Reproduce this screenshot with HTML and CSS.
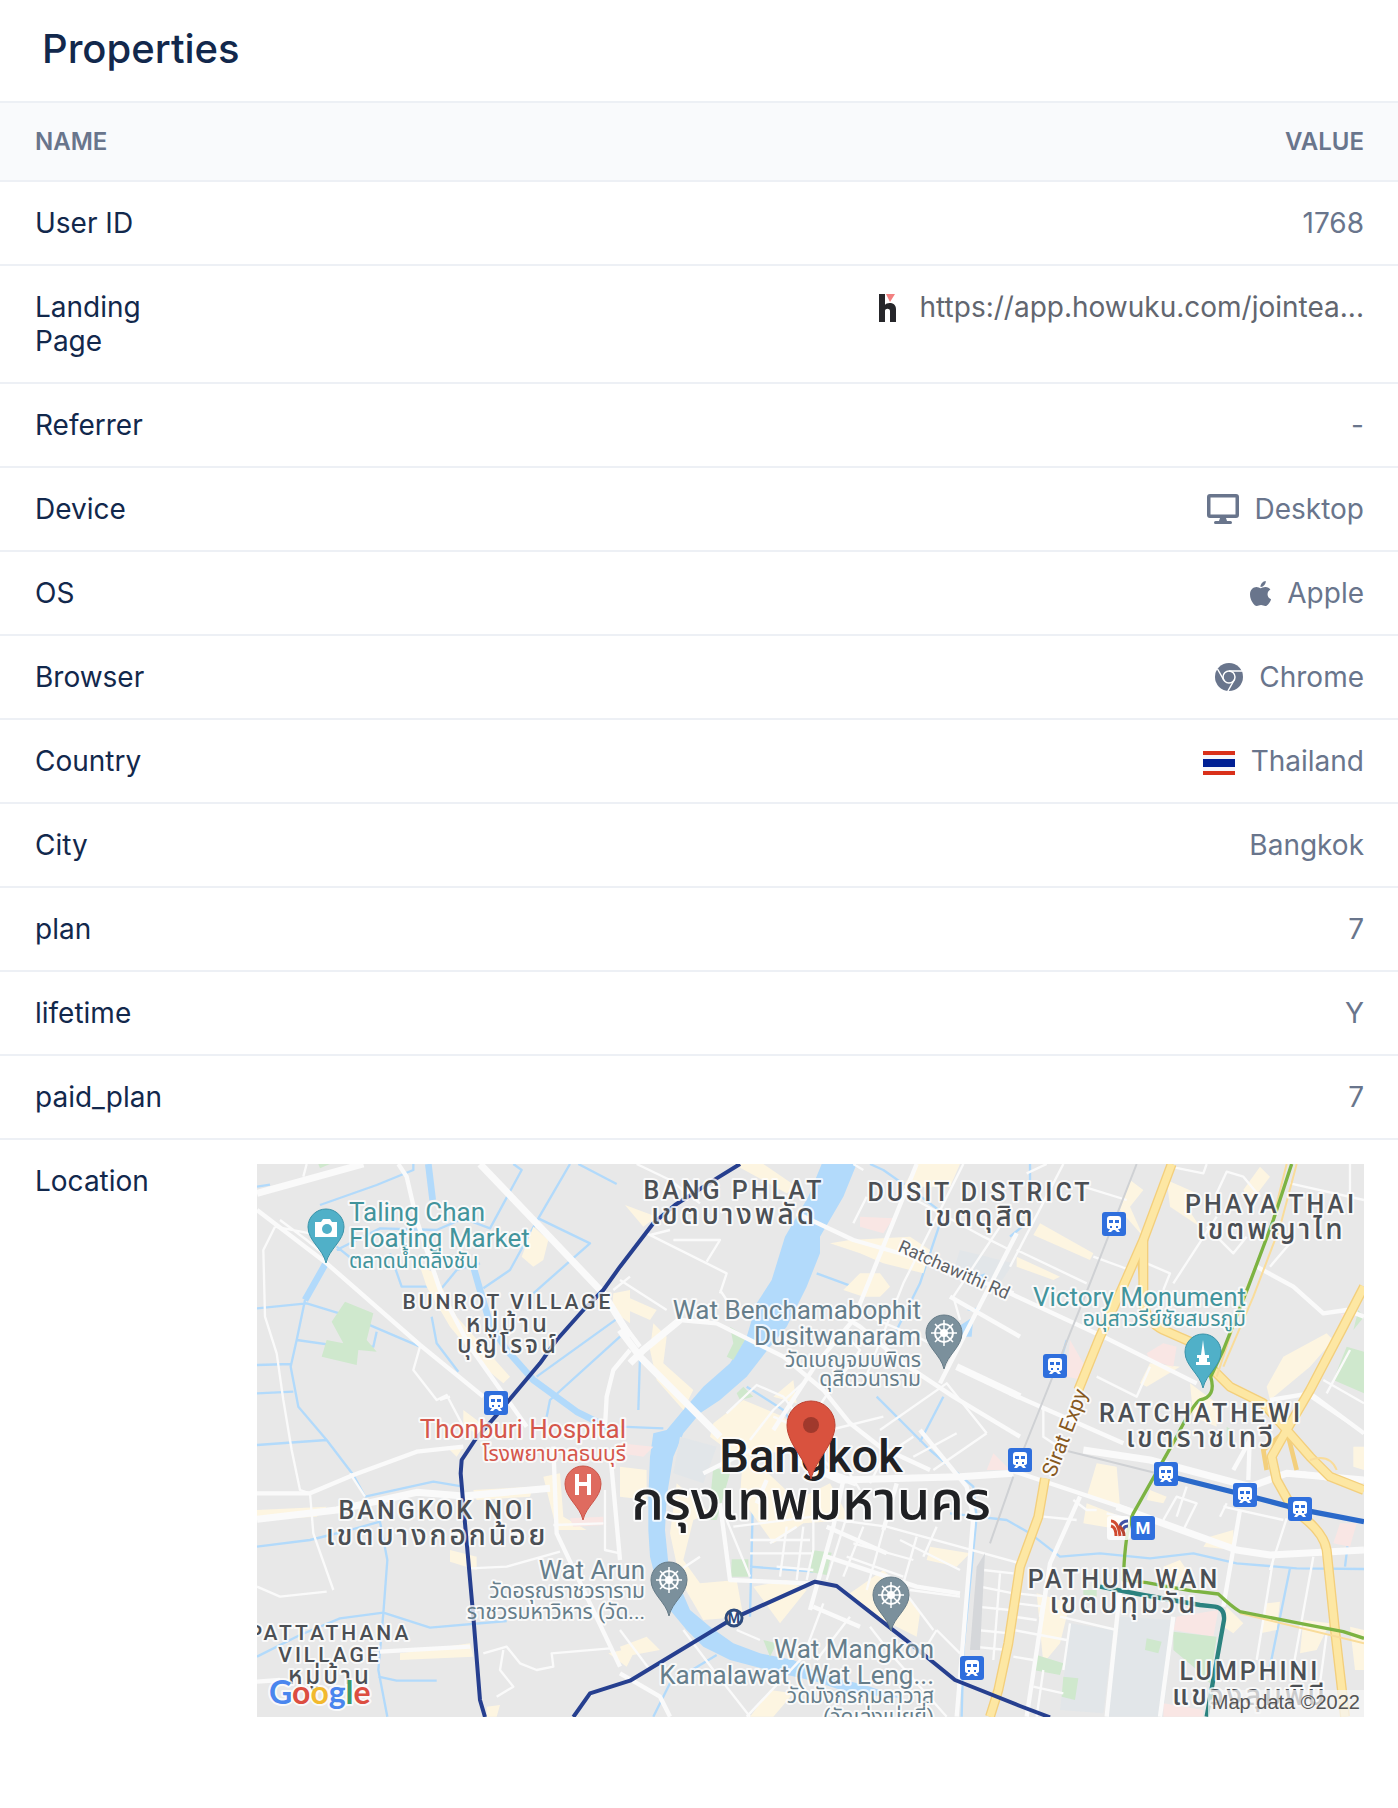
FILE: index.html
```html
<!DOCTYPE html>
<html lang="en">
<head>
    <meta charset="UTF-8">
    <meta name="viewport" content="width=device-width, initial-scale=1.0">
    <title>Properties</title>
    <link rel="stylesheet" href="styles.css">
</head>
<body>
    <section class="properties">
        <h2 class="title">Properties</h2>

        <table class="props-table">
            <thead>
                <tr>
                    <th class="name" scope="col">NAME</th>
                    <th class="value" scope="col">VALUE</th>
                </tr>
            </thead>
            <tbody>
                <tr>
                    <td class="name">User ID</td>
                    <td class="value">1768</td>
                </tr>
                <tr>
                    <td class="name">Landing Page</td>
                    <td class="value">
                        <a class="item link" href="#">
                            <svg class="icon" width="32" height="32" viewBox="0 0 32 32" aria-hidden="true">
                                <path d="M7 3h6v11c2-3 11-3 11 4v13h-6V20c0-3-5-3-5 0v11H7z" fill="#26262a"/>
                                <path d="M14 3h9l-5 8z" fill="#f28080"/>
                            </svg>
                            <span>https://app.howuku.com/jointea...</span>
                        </a>
                    </td>
                </tr>
                <tr>
                    <td class="name">Referrer</td>
                    <td class="value">-</td>
                </tr>
                <tr>
                    <td class="name">Device</td>
                    <td class="value">
                        <span class="item">
                            <svg class="icon" width="32" height="30" viewBox="0 0 32 30" aria-hidden="true">
                                <path fill-rule="evenodd" d="M3 0h26a3 3 0 0 1 3 3v18a3 3 0 0 1-3 3H19l1 3h3.500a1.500 1.500 0 0 1 0 3h-15a1.500 1.500 0 0 1 0-3H12l1-3H3a3 3 0 0 1-3-3V3a3 3 0 0 1 3-3zM3.500 3.500v17h25v-17z"/>
                            </svg>
                            <span>Desktop</span>
                        </span>
                    </td>
                </tr>
                <tr>
                    <td class="name">OS</td>
                    <td class="value">
                        <span class="item">
                            <svg class="icon" width="21" height="25" viewBox="4 32 376 448" aria-hidden="true">
                                <path d="M318.700 268.700c-.2-36.700 16.400-64.400 50-84.800-18.800-26.900-47.200-41.700-84.700-44.600-35.500-2.800-74.300 20.700-88.500 20.700-15 0-49.400-19.700-76.400-19.700C63.300 141.200 4 184.800 4 273.500q0 39.300 14.400 81.200c12.800 36.700 59 126.700 107.200 125.200 25.200-.6 43-17.900 75.800-17.900 31.800 0 48.300 17.900 76.400 17.900 48.600-.7 90.400-82.500 102.600-119.300-65.200-30.700-61.700-90-61.700-91.900zm-56.600-164.200c27.300-32.400 24.800-61.900 24-72.500-24.100 1.400-52 16.400-67.900 34.900-17.500 19.800-27.800 44.300-25.600 71.900 26.100 2 49.900-11.400 69.500-34.300z"/>
                            </svg>
                            <span>Apple</span>
                        </span>
                    </td>
                </tr>
                <tr>
                    <td class="name">Browser</td>
                    <td class="value">
                        <span class="item">
                            <svg class="icon" width="28" height="28" viewBox="0 0 28 28" aria-hidden="true">
                                <circle cx="14" cy="14" r="14"/>
                                <g fill="none" stroke="#fff" stroke-width="1.500">
                                    <circle cx="14" cy="14" r="6"/>
                                    <path d="M14 8h13M8.800 17L2.500 6M19.200 17l-6.300 11"/>
                                </g>
                            </svg>
                            <span>Chrome</span>
                        </span>
                    </td>
                </tr>
                <tr>
                    <td class="name">Country</td>
                    <td class="value">
                        <span class="item">
                            <svg class="icon" width="32" height="28" viewBox="0 0 32 28" aria-hidden="true">
                                <path d="M0 4h32v24H0z" fill="#d9301a"/>
                                <path d="M0 8h32v16H0z" fill="#f6f6fb"/>
                                <path d="M0 12h32v8H0z" fill="#001f94"/>
                            </svg>
                            <span>Thailand</span>
                        </span>
                    </td>
                </tr>
                <tr>
                    <td class="name">City</td>
                    <td class="value">Bangkok</td>
                </tr>
                <tr>
                    <td class="name">plan</td>
                    <td class="value">7</td>
                </tr>
                <tr>
                    <td class="name">lifetime</td>
                    <td class="value">Y</td>
                </tr>
                <tr>
                    <td class="name">paid_plan</td>
                    <td class="value">7</td>
                </tr>
                <tr>
                    <td class="name">Location</td>
                    <td class="value">
                        <svg class="map" viewBox="0 0 1107 553" role="img" aria-label="Map of Bangkok">
                            <defs>
                                <path id="pin" d="M0 36C-3 22-18 14-18 0A18 18 0 1 1 18 0C18 14 3 22 0 36z"/>
                                <g id="wheel" fill="none" stroke="#fff" stroke-width="2">
                                    <circle r="9"/>
                                    <circle r="3"/>
                                    <path d="M0-13V13M-13 0H13M-9-9L9 9M9-9L-9 9" stroke-width="1.500"/>
                                </g>
                                <g id="train">
                                    <rect x="-12" y="-12" width="24" height="24" rx="3" fill="#2f6fdd"/>
                                    <path fill="#fff" fill-rule="evenodd" d="M-4-8h8q3 0 3 3v8q0 2-3 2l2 3H3L1 6h-2l-2 2h-3l2-3q-3 0-3-2v-8q0-3 3-3zM-5-4v3h4v-3zM1-4v3h4v-3zM-4 2v2h2V2zM2 2v2h2V2z"/>
                                </g>
                            </defs>

                            <svg viewBox="21 42 3321 1659">
                                <rect class="land" x="21" y="42" width="3321" height="1659"/>

                                <!-- river and canals -->
                                <path class="water" d="M1715 42L1675 140 1605 260 1565 390 1520 460 1490 560 1440 640 1360 710 1300 780 1250 840 1210 850 1200 920 1195 1040 1195 1140 1200 1220 1220 1300 1260 1380 1310 1440 1360 1490 1440 1530 1590 1570 1700 1595 1800 1630 1960 1645 1860 1610 1710 1570 1630 1530 1530 1510 1450 1480 1380 1430 1320 1380 1290 1310 1255 1240 1245 1140 1250 1040 1270 920 1300 850 1350 790 1410 750 1490 680 1560 590 1610 530 1670 410 1710 310 1710 260 1780 140 1820 42z"/>
                                <g class="canal wide">
                                    <path d="M535 42L548 150M670 350L690 420 720 520 770 600 850 690 980 785 1110 850M230 335L165 450"/>
                                </g>
                                <g class="canal">
                                    <path d="M165 450L140 570 122 650 145 770 230 870 310 975 345 1040M21 475L170 460 300 500 510 590M140 570L280 590 370 590 380 545M345 1040L550 995 640 1010M21 1190L180 1170 300 1140 390 1115 412 1230 400 1390 385 1560 412 1700M21 1520L150 1455 270 1405 400 1388 540 1433 770 1413M385 1580L440 1592 560 1592M21 730L130 725M21 645L122 642M21 885L230 870M21 110L60 104M210 165L380 105 490 60 490 42M260 300L390 235 560 240 640 205 720 235 815 60 790 42M700 415L780 360 865 205 960 42M865 205L1020 280 850 430M545 500L560 580 625 665M420 310L455 410 540 410M575 415L620 360 690 340M890 800L900 750 1110 560M860 680L1110 500M985 42L1100 102M260 290L310 330"/>
                                    <path d="M1860 42L1900 60 2000 130 2080 190 2010 400 1940 540M1700 370L1800 407M1490 710L1600 780 1640 840M1110 830L1240 835M1170 620L1165 780M1880 740L2040 900 2170 1010 2180 1100 2140 1500 2135 1700M1510 1000L1500 1400M1500 1250L1690 1265M2100 1090L2270 1110 2340 1150 2430 1220 2550 1210 2700 1225 2830 1210 2960 1240 3140 1255 3342 1257M3120 1255L3060 1550M2450 570L2430 640M1210 1700L1260 1600 1400 1515M2010 875L2080 740M2340 210L2280 260M2340 42V130M3300 1130L3285 1250"/>
                                </g>

                                <!-- commercial areas -->
                                <path class="shop" d="M850 230L895 270 880 330 850 350 815 320zM510 350L560 370 570 400 620 500 780 680 760 700 700 650 600 530 530 410zM640 780L720 840 700 860 640 830zM1090 430L1140 420V520L1085 480zM1125 165L1220 200 1180 230zM590 890H640L620 920zM600 1200L680 1220 680 1260 600 1235zM21 1080L230 1070 200 1100 21 1110zM450 1510L660 1480 670 1520 450 1530zM710 1670L750 1665 740 1700H710zM1075 1510L1160 1490 1130 1550zM880 980L930 970 940 1100 1010 1140H920zM670 1020L850 1010 840 1040 680 1050z"/>
                                <path class="shop" d="M1450 42H1540L1640 110 1610 130zM1740 280L1800 270 1980 260 2040 300 2020 370 1900 340 1830 310zM1780 420L1830 370 1890 370 1920 410 1890 440 1840 440zM1960 110L2000 42 2130 42 2100 110zM1130 440L1220 480 1200 510 1110 470zM1210 520L1250 560 1240 640 1330 720 1300 780 1220 690 1200 600zM1390 820L1480 750 1600 800 1660 860 1640 900 1460 920 1380 860zM1280 1000L1380 1090 1330 1110 1300 1230 1350 1300 1460 1290 1480 1400 1360 1410 1290 1290 1260 1150zM1480 900L1640 1050 1740 1000 1800 1110 1660 1120 1570 1180 1470 1040zM1510 1310L1610 1290 1670 1320 1590 1420zM1800 1330L1900 1260 1960 1320 2010 1390 2000 1460 1880 1400zM2040 1190L2160 1210 2120 1250 2030 1230zM1560 1620L1630 1630 1570 1700H1500zM1110 1490L1190 1460 1230 1500 1120 1520zM1570 740L1630 690 1640 760zM1110 950L1190 960 1190 1050 1110 1040z"/>
                                <path class="shop" d="M2370 220L2530 310 2520 330 2350 255zM2300 320L2430 380 2410 390 2300 350zM2640 90L2680 120 2640 170 2680 260 2610 180zM2750 90L2840 130 2810 170 2850 230 2760 170zM3030 50L3060 80 3000 160 2980 120zM2700 640L2790 650 2690 710 2670 700zM2820 700L2900 760 2900 830 2830 800zM3050 710L3100 620 3230 550 3250 570 3180 650 3060 750zM2540 940L2600 950 2610 1070 2510 1040zM2700 1020L2750 1040 2740 1060 2690 1050zM2510 1060L2640 1110 2620 1140 2500 1120zM2880 1160L2950 1140 2950 1200 2860 1190zM2740 1250L2790 1230 2810 1260 2770 1320zM3050 1360L3090 1355 3080 1440 3030 1450zM2930 1370L2980 1420 2950 1450 2920 1430zM3160 1410L3240 1420 3200 1500 3150 1510zM3310 890L3342 890V960L3310 950zM2360 1330L2460 1360 2430 1480 2380 1540zM3300 1430L3342 1440V1560H3315z"/>

                                <!-- campuses, hospitals, parks -->
                                <path class="campus" d="M2460 1420L2590 1440 2560 1690 2430 1680zM2610 1400L2770 1410 2740 1700H2570zM2130 300L2290 340 2230 430 2110 360zM1290 860L1400 890 1360 1000 1270 970z"/>
                                <path class="clinic" d="M1830 200L1930 205 1900 250 1830 230zM1110 880L1210 890 1180 920 1110 910zM960 1105L1060 1100V1125L970 1130zM2690 610L2740 580 2780 590 2770 650 2700 630zM2460 570L2500 640 2500 690 2450 680zM2780 1400L2905 1380 2890 1460 2770 1440zM2740 1660L2860 1680V1700H2740zM3270 1120H3320L3300 1190 3250 1180zM2230 910L2280 960 2210 960zM3270 490L3300 495 3290 520z"/>
                                <path class="park" d="M285 455L370 490 350 570 380 605 325 600 320 645 215 620 230 570 280 580 245 515zM205 42H240L210 55zM1440 530L1490 560 1450 630 1430 620 1450 580zM1460 730L1480 710 1510 740 1470 750zM1390 950L1440 970 1400 1110 1375 1110zM1445 1228L1495 1228V1280L1443 1280zM1685 1200L1745 1208 1730 1275 1675 1265zM1540 1470L1580 1480 1560 1520zM3290 590L3342 605V730L3250 690zM2360 1515L2440 1540 2430 1575 2350 1560zM2440 1580L2485 1585 2475 1650 2435 1640zM2690 1465L2735 1475 2725 1510 2685 1500zM2770 1445L2900 1460 2880 1600 2830 1550 2770 1500zM2500 1320H2540V1340L2500 1335zM2930 830L2945 840 2930 880zM3325 480L3342 500 3310 540z"/>
                                <path class="water" d="M2175 380L2205 370 2190 410zM2110 540L2170 500 2165 560 2120 560zM2150 480L2190 470V490z"/>

                                <!-- streets -->
                                <g class="road">
                                    <path d="M170 42L160 80M75 230L40 300 45 500 80 610 100 750 125 900 150 1020 180 1030 190 1150 250 1320M75 230L180 250M510 590L490 660 560 750 590 735 640 830M90 210L170 270 230 320M21 1310L90 1340 230 1325M700 1510L770 1490 810 1540 860 1560 910 1550 905 1510 1080 1495M760 1500L750 1560 790 1610 740 1640M660 1255L770 1250 930 1205M910 1125L1060 1120M1065 1020V1200L1110 1210M1140 380L1090 420M300 970L345 1040M570 750L600 740"/>
                                    <path d="M1110 390L1250 480M1160 42L1260 90 1350 160M1200 255L1260 240M1190 250L1430 370 1410 430M1270 270H1410L1370 335M1410 420L1430 450M1430 790L1520 705 1600 740 1630 780M1500 870L1570 780 1680 680M1570 800L1660 840 1740 720M1760 700L1830 600 1780 550M1810 42L1840 60M2140 42L1960 400 1840 700M1810 220L1850 140M1960 130L2200 260 2280 300M2250 230L2110 440 2130 510M1810 480L2000 560 2100 610M1890 840L2090 700 2210 850M1990 920L2120 850M2050 960L2210 850"/>
                                    <path d="M1450 1130L1690 1100 1910 1130 2310 1240M1430 1110L1500 1280M1560 1180L1640 1130M1610 1130L1590 1280M1660 1130L1640 1290M1690 1100V1200L1670 1290M1500 1210H1690M1500 1170H1680M1580 1250L1690 1260M1790 1100L1730 1290M1840 1130L1780 1280M1900 1140L1850 1320M1810 1180L1990 1230M1790 1220L1960 1280M1950 1170L2130 1260M2000 1160L1960 1300M2060 1130L2020 1220M2200 1260L2290 1270M2190 1310L2290 1330M2180 1370L2280 1380M2180 1440L2280 1450M2170 1490L2270 1500M2250 1270L2230 1530M2130 1340L1980 1320M2050 1440L1930 1280M2060 1440L2130 1510M2060 1440L2010 1520M1460 1440L1530 1470M1720 1360L1660 1520 1490 1700M1800 1400L1700 1530M1860 1430L1930 1520 2090 1700M1110 1440L1200 1560M1290 1260L1350 1220M1390 1560L1500 1700M1300 1440L1390 1560M1740 920V840L1900 800M1780 940L1830 1020M1860 1000L1900 920 1990 860M1650 860L1740 950"/>
                                    <path d="M2440 42L2280 350M2390 42L2330 70M2500 110L2630 150M2300 300L2510 400M2530 320L2640 360M2690 340L2760 370 2740 420M2770 400L2900 200M2870 230L2950 310 2990 260M2900 130L2930 65 2980 80 3030 140M3060 350L3120 280M2760 50L2860 70 2870 42M3120 100L3342 150M3300 42V180M2540 680L2660 740 2700 650M2380 770V860L2440 900M2570 1090L2650 1110M2470 1050L2510 1080 2540 1080M2740 1110L2780 1040 2840 1060 2800 1140M2780 1100L2810 1010M2920 1070L3100 1110M2930 1060L2910 1100M3110 1105L3060 1260M3070 1225L3020 1530M3190 1220L3130 1550M3230 1450L3210 1600M2300 1330L2390 1340M2300 1360L2380 1370M2290 1400L2360 1410M2290 1440L2450 1470M2290 1520L2350 1530M2380 1100L2480 1110M2400 1240L2370 1400M2460 1420L2440 1560M2350 1610L2440 1630M2380 1560L2360 1700M2430 1400L2600 1440M3220 690L3342 760M3180 740L3342 850M3300 600L3230 730"/>
                                </g>
                                <g class="road mid">
                                    <path d="M445 42L470 80 500 210 570 420 660 590 830 830M21 180L230 340 510 585 700 740M1140 600L1090 660 1070 740 1065 830M21 1030L180 1030 310 975 500 905 640 890M910 890L920 1150 1110 1550M1080 900L1110 1230M390 1505L660 1490M21 1595L90 1590"/>
                                    <path d="M1640 190L1810 270 2020 330 2290 430M2000 42L1810 510 1700 640 1570 840M1110 510L1170 590M1290 510L1400 520 1600 620 1720 720 1800 820 1890 890 2040 960M1750 480L1830 530 1960 640 2110 740 2310 860M2310 560L2100 440M2300 250L2070 700M1410 1060L1440 1290 1680 1300M1780 990L1750 1130 1680 1380M1940 1000L1900 1140M2010 840L2150 1010 2170 1100 2120 1700M1730 1130L1910 1210M1550 990L1520 1060M1730 1220L2000 1310 2130 1330M1690 1370L1830 1430M1110 1570L1230 1640 1260 1700M1500 900L1360 970"/>
                                    <path d="M2280 430L2560 560 2840 700M3020 350L3130 410 3220 490 3290 480 3342 500M2280 730L2620 880M2280 960L2640 1080M3000 840L2995 990M2970 1080L2920 1370M2490 1040L2400 1240 2330 1700M2610 1320L2570 1700M2770 1400L2730 1700M3060 750L3180 730 3342 850M3160 970L3342 1010M2950 960L3000 870"/>
                                </g>
                                <g class="road main">
                                    <path d="M21 130L340 42M690 42L860 220 1060 430 1140 560M21 1108L260 1080 500 1027 640 1038 900 1015M1110 540L1170 620 1410 860M1140 640L1180 600 1290 510M1660 940L1770 990 2130 980 2290 970M2120 650L2310 740M2600 1070L2960 1200 3060 1215 3342 1200M2500 900L2700 930 3000 1010 3110 970 3342 990M1630 930L1820 1000"/>
                                </g>

                                <!-- railway -->
                                <path class="rail" d="M2660 42L2520 400 2320 900M2290 980L2220 1180M2440 900L2720 970"/>
                                <path d="M2205 1210L2190 1500H2160L2180 1250z" fill="#d5d7da"/>

                                <!-- expressways -->
                                <g class="highway edge">
                                    <path d="M2765 42L2680 270 2610 430 2550 560 2485 720M2385 985L2365 1100 2310 1250 2275 1480 2245 1620 2220 1700"/>
                                    <path d="M2680 270V460Q2690 515 2740 540L2820 575 2880 650 2940 710 3040 760 3110 840 3180 920 3240 980 3342 1020M3342 410L3280 530 3180 720 3110 840 3065 920 3080 990 3130 1080Q3220 1140 3230 1200L3255 1440 3285 1700"/>
                                    <path d="M2665 300L2675 400M3050 960L3040 900 3110 840 3140 960" class="ramp"/>
                                </g>
                                <g class="highway">
                                    <path d="M2765 42L2680 270 2610 430 2550 560 2485 720M2385 985L2365 1100 2310 1250 2275 1480 2245 1620 2220 1700"/>
                                    <path d="M2680 270V460Q2690 515 2740 540L2820 575 2880 650 2940 710 3040 760 3110 840 3180 920 3240 980 3342 1020M3342 410L3280 530 3180 720 3110 840 3065 920 3080 990 3130 1080Q3220 1140 3230 1200L3255 1440 3285 1700"/>
                                </g>
                                <path class="highway thin" d="M3110 42L3060 240 2980 440 2900 680M3140 42L3090 230 3010 440 2920 650M2970 1390L3342 1480M3180 930Q3240 910 3260 960"/>

                                <!-- transit lines -->
                                <path class="transit green" d="M3125 42L3070 210 2995 410 2920 600 2882 680Q2900 740 2850 750 2830 760 2780 860L2650 1090Q2625 1140 2620 1290L2690 1298 2820 1322 2905 1332Q2945 1370 2970 1385L3150 1420 3280 1445 3342 1465"/>
                                <path class="transit teal" d="M2550 1310L2680 1335 2850 1365 2895 1370Q2925 1375 2922 1410L2870 1700"/>
                                <path class="transit blue" d="M2745 975L2985 1035 3150 1078 3342 1115"/>
                                <path class="transit navy" d="M1470 42L1400 85 1275 165 1210 220 1110 350 1060 420 1000 480 920 570 870 640 740 795 675 870 635 930 632 970 645 1120 670 1400 690 1650 705 1701M970 1701L1020 1630 1140 1592 1450 1405 1695 1295 1760 1308 1970 1472 2115 1590 2310 1668 2400 1702"/>
                            </svg>

                            <!-- districts -->
                            <g class="district">
                                <text x="477" y="35">BANG PHLAT</text>
                                <text class="thai" x="477" y="60">เขตบางพลัด</text>
                                <text x="723" y="37">DUSIT DISTRICT</text>
                                <text class="thai" x="723" y="62">เขตดุสิต</text>
                                <text x="1014" y="49">PHAYA THAI</text>
                                <text class="thai" x="1014" y="75">เขตพญาไท</text>
                                <text x="944" y="258">RATCHATHEWI</text>
                                <text class="thai" x="944" y="283">เขตราชเทวี</text>
                                <text x="180" y="355">BANGKOK NOI</text>
                                <text class="thai" x="180" y="381">เขตบางกอกน้อย</text>
                                <text x="867" y="424">PATHUM WAN</text>
                                <text class="thai" x="867" y="449">เขตปทุมวัน</text>
                                <text x="993" y="516">LUMPHINI</text>
                                <text class="thai" x="993" y="541">แขวงลุมพินี</text>
                            </g>
                            <g class="district village">
                                <text x="251" y="145">BUNROT VILLAGE</text>
                                <text class="thai" x="251" y="168">หมู่บ้าน</text>
                                <text class="thai" x="251" y="189">บุญโรจน์</text>
                                <text x="73" y="476">PATTATHANA</text>
                                <text x="73" y="498">VILLAGE</text>
                                <text class="thai" x="73" y="520">หมู่บ้าน</text>
                            </g>

                            <!-- street names -->
                            <text class="street" transform="translate(640 87) rotate(24)">Ratchawithi Rd</text>
                            <text class="street expy" transform="translate(798 314) rotate(-69)">Sirat Expy</text>

                            <!-- places -->
                            <g class="place sight">
                                <text x="92" y="57">Taling Chan</text>
                                <text x="92" y="83">Floating Market</text>
                                <text class="thai" x="92" y="104">ตลาดน้ำตลิ่งชัน</text>
                            </g>
                            <g class="place sight end">
                                <text x="989" y="142">Victory Monument</text>
                                <text class="thai" x="989" y="162">อนุสาวรีย์ชัยสมรภูมิ</text>
                            </g>
                            <g class="place hospital end">
                                <text x="369" y="274">Thonburi Hospital</text>
                                <text class="thai" x="369" y="297">โรงพยาบาลธนบุรี</text>
                            </g>
                            <g class="place temple end">
                                <text x="664" y="155">Wat Benchamabophit</text>
                                <text x="664" y="181">Dusitwanaram</text>
                                <text class="thai" x="664" y="203">วัดเบญจมบพิตร</text>
                                <text class="thai" x="664" y="222">ดุสิตวนาราม</text>
                                <text x="388" y="415">Wat Arun</text>
                                <text class="thai" x="388" y="434">วัดอรุณราชวราราม</text>
                                <text class="thai" x="388" y="455">ราชวรมหาวิหาร (วัด...</text>
                                <text x="677" y="494">Wat Mangkon</text>
                                <text x="677" y="520">Kamalawat (Wat Leng...</text>
                                <text class="thai" x="677" y="539">วัดมังกรกมลาวาส</text>
                                <text class="thai" x="677" y="560">(วัดเล่งเน่ยยี่)</text>
                            </g>
                            <g class="city">
                                <text x="554" y="308">Bangkok</text>
                                <text class="thai" x="554" y="355">กรุงเทพมหานคร</text>
                            </g>

                            <!-- stations -->
                            <use href="#train" x="239" y="239"/>
                            <use href="#train" x="857" y="60"/>
                            <use href="#train" x="798" y="202"/>
                            <use href="#train" x="763" y="296"/>
                            <use href="#train" x="909" y="310"/>
                            <use href="#train" x="988" y="331"/>
                            <use href="#train" x="1043" y="345"/>
                            <use href="#train" x="715" y="504"/>
                            <rect x="874" y="352" width="24" height="24" rx="3" fill="#2f6fdd"/>
                            <text class="badge" x="886" y="370">M</text>
                            <rect x="850" y="352" width="23" height="24" rx="3" fill="#fff" fill-opacity=".8"/>
                            <g fill="none" stroke-width="3">
                                <path d="M854 357q7 0 9 15M854 362q5 1 5 10" stroke="#d04a30"/>
                                <path d="M871 357q-6 0-8 5M871 362q-4 0-5 4" stroke="#3f51a5"/>
                                <path d="M862 362q5 4 5 10" stroke="#b5452f"/>
                            </g>
                            <circle cx="477" cy="454" r="8" fill="#fff" stroke="#2d4a7c" stroke-width="3"/>
                            <text class="badge metro" x="477" y="459">M</text>

                            <!-- pins -->
                            <g transform="translate(69 63)">
                                <use href="#pin" fill="#50b0c8" stroke="#3b93a9"/>
                                <path fill="#fff" d="M-11-5h6l2-3h7l2 3h5V10h-22z"/>
                                <circle cx="1" cy="2" r="5" fill="#50b0c8"/>
                            </g>
                            <g transform="translate(946 188)">
                                <use href="#pin" fill="#50b0c8" stroke="#3b93a9"/>
                                <path fill="#fff" d="M0-12L2 3h4v3H4v4h3v3H-7v-3h3V6h-2V3h4z"/>
                            </g>
                            <g transform="translate(326 320)">
                                <use href="#pin" fill="#df6b5f" stroke="#cb5549"/>
                                <path fill="none" stroke="#fff" stroke-width="4" d="M-6-10V11M6-10V11M-6 0H6"/>
                            </g>
                            <g transform="translate(687 169)">
                                <use href="#pin" fill="#7b909c" stroke="#677c88"/>
                                <use href="#wheel"/>
                            </g>
                            <g transform="translate(412 416)">
                                <use href="#pin" fill="#7b909c" stroke="#677c88"/>
                                <use href="#wheel"/>
                            </g>
                            <g transform="translate(634 431)">
                                <use href="#pin" fill="#7b909c" stroke="#677c88"/>
                                <use href="#wheel"/>
                            </g>
                            <path d="M554 315C549 295 530 280 530 261A24 24 0 1 1 578 261C578 280 559 295 554 315z" fill="#d9523e" stroke="#bd4232"/>
                            <circle cx="554" cy="261" r="8" fill="#a0392c"/>

                            <!-- attribution -->
                            <rect x="951" y="526" width="156" height="27" fill="#f5f5f5" fill-opacity=".75"/>
                            <text class="credit" x="1103" y="545">Map data ©2022</text>
                            <text class="google" x="12" y="540"><tspan fill="#4a86ee">G</tspan><tspan fill="#dc4e41">o</tspan><tspan fill="#f2b92e">o</tspan><tspan fill="#4a86ee">g</tspan><tspan fill="#3d9a67">l</tspan><tspan fill="#dc4e41">e</tspan></text>
                        </svg>
                    </td>
                </tr>
            </tbody>
        </table>
    </section>
</body>
</html>
```
FILE: styles.css
```css
* {
    margin: 0;
    padding: 0;
    box-sizing: border-box;
}

body {
    background: #fff;
    color: #12284c;
    font-family: Inter, "Liberation Sans", sans-serif;
    font-size: 28px;
    line-height: 34px;
}

.title {
    padding: 25px 42px 28px;
    font-size: 40px;
    font-weight: 500;
    line-height: 48px;
}

.props-table {
    width: 100%;
    border-collapse: collapse;
    border-spacing: 0;
    table-layout: fixed;
}

.props-table tr {
    border-top: 2px solid #edf0f5;
}

.props-table th,
.props-table td {
    padding: 24px 34px 24px 35px;
    text-align: left;
    vertical-align: top;
}

.props-table th {
    background: #f9fafc;
    color: #69758c;
    font-size: 24px;
    font-weight: 600;
    line-height: 29px;
}

.props-table .name {
    width: 222px;
}

.props-table .value {
    color: #69758c;
    text-align: right;
}

.item {
    display: flex;
    justify-content: flex-end;
    align-items: center;
    gap: 16px;
}

.link {
    color: #62666f;
    text-decoration: none;
}

.icon {
    flex: none;
    fill: #69758c;
}

/* Map */
.map {
    display: block;
    width: 100%;
    height: auto;
    overflow: hidden;
    font-family: Roboto, "Noto Sans Thai", "Noto Sans", sans-serif;
}

.land {
    fill: #e8e8e8;
}

.water {
    fill: #b2dafb;
}

.shop {
    fill: #fdf5e1;
}

.campus {
    fill: #e2e6e9;
}

.clinic {
    fill: #f9e6e4;
}

.park {
    fill: #cfe8cd;
}

.canal,
.road,
.rail,
.highway,
.transit {
    fill: none;
    stroke-linejoin: round;
}

.canal {
    stroke: #b2dafb;
    stroke-width: 7;
}

.canal.wide {
    stroke-width: 20;
}

.road {
    stroke: #fafafa;
    stroke-width: 7;
}

.road.mid {
    stroke-width: 13;
}

.road.main {
    stroke-width: 21;
}

.rail {
    stroke: #cfd1d4;
    stroke-width: 6;
}

.highway {
    stroke: #fde7a3;
    stroke-width: 22;
}

.highway.edge {
    stroke: #f3cf7c;
    stroke-width: 30;
}

.highway .ramp {
    stroke-width: 14;
}

.highway.thin {
    stroke: #f9dc9a;
    stroke-width: 6;
}

.transit {
    stroke-width: 12;
}

.green {
    stroke: #7cb342;
    stroke-width: 10;
}

.teal {
    stroke: #2b827f;
    stroke-width: 13;
}

.blue {
    stroke: #2a69c9;
    stroke-width: 16;
}

.navy {
    stroke: #263f8f;
}

.map text {
    paint-order: stroke;
    stroke: #fff;
    stroke-opacity: .8;
    stroke-width: 4px;
    stroke-linejoin: round;
}

.district {
    fill: #4b4f54;
    font-size: 25px;
    font-weight: 500;
    letter-spacing: 3px;
    text-anchor: middle;
}

.district .thai {
    font-size: 28px;
}

.village {
    font-size: 21px;
}

.village .thai {
    font-size: 24px;
}

.place {
    font-size: 26px;
}

.place .thai {
    font-size: 21px;
}

.end {
    text-anchor: end;
}

.sight {
    fill: #42949c;
}

.hospital {
    fill: #d5574b;
}

.temple {
    fill: #667e8b;
}

.city {
    fill: #202124;
    font-size: 47px;
    font-weight: 500;
    text-anchor: middle;
}

.city .thai {
    font-size: 54px;
}

.street {
    fill: #5d6166;
    font-size: 18px;
}

.expy {
    fill: #87591f;
    font-size: 21px;
}

.map .badge {
    fill: #fff;
    stroke: none;
    font-size: 17px;
    font-weight: 700;
    text-anchor: middle;
}

.map .metro {
    fill: #2d4a7c;
    font-size: 14px;
}

.map .credit {
    fill: #555;
    stroke: none;
    font-family: "Liberation Sans", Arial, sans-serif;
    font-size: 20px;
    text-anchor: end;
}

.google {
    font-family: Lato, sans-serif;
    font-size: 32px;
    font-weight: 700;
}
```
